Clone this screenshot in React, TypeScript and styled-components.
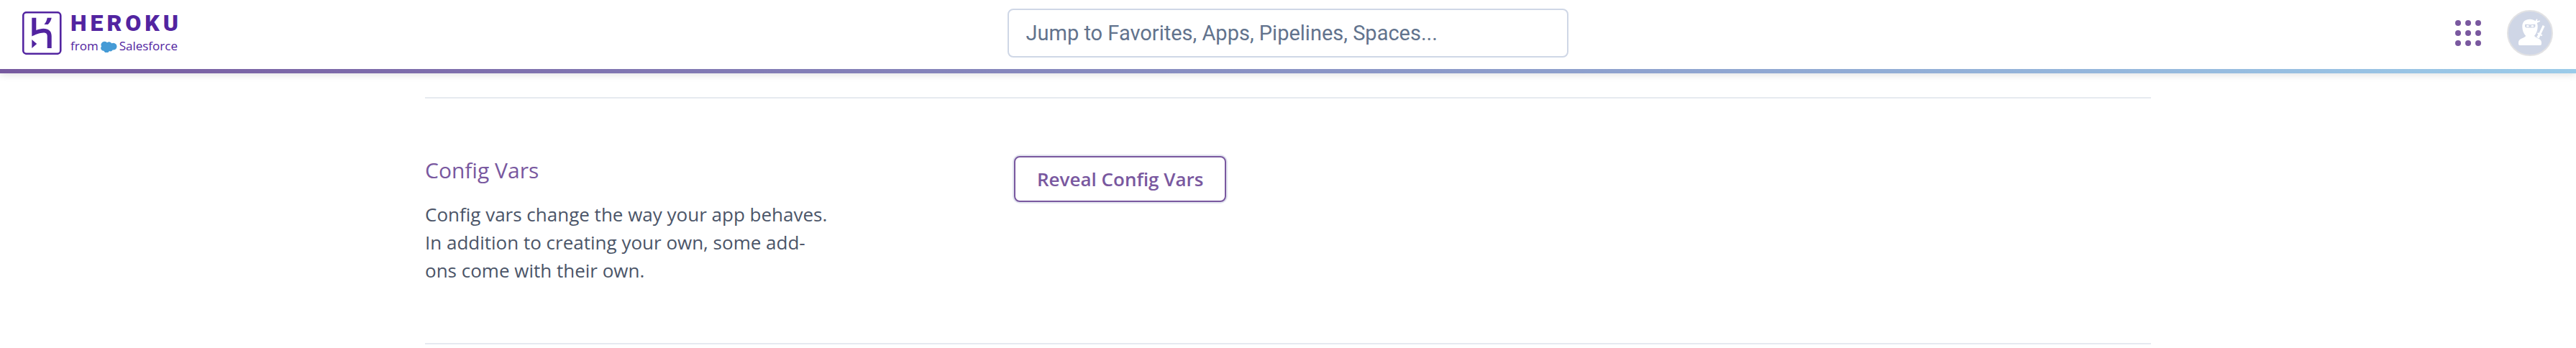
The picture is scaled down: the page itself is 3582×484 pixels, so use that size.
import React from 'react';
import styled, { createGlobalStyle } from 'styled-components';

const brand = '#5224a0';
const purple = '#79589f';

const GlobalStyle = createGlobalStyle`
  *, *::before, *::after { box-sizing: border-box; }
  body {
    margin: 0;
    background: #fff;
    color: #4b5568;
    font-family: 'Open Sans', 'Noto Sans', sans-serif;
  }
`;

const Header = styled.header`
  display: grid;
  grid-template-columns: 1fr minmax(0, 780px) 1fr;
  align-items: center;
  height: 102px;
  padding: 0 32px 4px 31px;
  border-bottom: 6px solid;
  border-image: linear-gradient(to right, #775a9f, #9bcbe9) 1;
  box-shadow: 0 2px 10px rgba(0, 0, 0, 0.12);
`;

const Brand = styled.a`
  display: flex;
  align-items: center;
  gap: 12px;
  justify-self: start;
  color: ${brand};
  text-decoration: none;
`;

const BrandText = styled.span`
  display: flex;
  flex-direction: column;
  gap: 4px;
`;

const Wordmark = styled.span`
  font: 900 32px/32px Roboto, sans-serif;
  letter-spacing: 5px;
`;

const Tagline = styled.span`
  display: flex;
  align-items: center;
  gap: 3px;
  font-size: 17px;
  line-height: 24px;
`;

const SearchInput = styled.input`
  width: 100%;
  height: 68px;
  padding: 0 24px;
  border: 2px solid #cfd7e6;
  border-radius: 8px;
  background: #fff;
  color: #62738d;
  font: 400 29px/40px Roboto, sans-serif;
  outline: none;

  &::placeholder {
    color: #62738d;
    opacity: 1;
  }
`;

const Actions = styled.nav`
  display: flex;
  align-items: center;
  justify-self: end;
  gap: 36px;
`;

const IconButton = styled.button`
  display: flex;
  padding: 0;
  border: 0;
  background: none;
  cursor: pointer;
`;

const Main = styled.main`
  max-width: 2400px;
  margin: 0 auto;
  padding-top: 33px;
`;

const Section = styled.section`
  display: grid;
  grid-template-columns: 570px 1fr;
  column-gap: 249px;
  align-items: start;
  padding: 80px 0 81px;
  border: solid #e6eaf0;
  border-width: 2px 0;
`;

const Title = styled.h2`
  margin: 0 0 22px;
  color: ${purple};
  font-size: 30px;
  font-weight: 400;
  line-height: 40px;
`;

const Description = styled.p`
  margin: 0;
  font-size: 26px;
  line-height: 39px;
`;

const OutlineButton = styled.button`
  justify-self: start;
  height: 64px;
  padding: 0 30px;
  border: 2px solid ${purple};
  border-radius: 8px;
  background: #fff;
  box-shadow: 0 0 0 2px #e3e5f0;
  color: ${purple};
  font: 600 26px/36px 'Open Sans', 'Noto Sans', sans-serif;
  cursor: pointer;
`;

const HerokuMark = () => (
  <svg width="55" height="60" viewBox="31 16 55 60" aria-hidden="true">
    <rect x="32.25" y="17.25" width="52" height="57.5" rx="4.5" fill="none" stroke={brand} strokeWidth="2.6" />
    <g fill={brand}>
      <path d="M44.3 24.7h6v17.4c3.7-1.4 6.7-2.3 10.2-2.3 7 0 11.2 3.700 11.200 10.200v17h-6V50c0-3.500-2.200-4.600-5-4.600-5.500 0-12.500 2.900-16.400 5.100z" />
      <path d="M65.7 24.7h6c-.6 3.400-2.400 6.600-5 9.300h-5.300c2.300-2.700 3.800-5.900 4.300-9.300z" />
      <path d="M44.3 55v12l6.900-6z" />
    </g>
  </svg>
);

const SalesforceCloud = () => (
  <svg width="23" height="17" viewBox="1 -1 22 16" aria-hidden="true">
    <path
      fill="#459bd6"
      d="M9.500 1.900A4.100 4.100 0 0 1 15.600 2.900a5 5 0 0 1 2.300-.5A4.700 4.700 0 0 1 22.500 7.200a4.700 4.700 0 0 1-5.600 4.600 3.500 3.500 0 0 1-4.500 1.400A3.900 3.900 0 0 1 5.200 13a3.700 3.700 0 0 1-3.200-6A4.300 4.300 0 0 1 5.500.6a4.500 4.500 0 0 1 4 1.300z"
    />
  </svg>
);

const AppGrid = () => (
  <svg width="36" height="36" viewBox="0 0 36 36" fill={purple} aria-hidden="true">
    {[4, 18, 32].map((cy) => [4, 18, 32].map((cx) => <circle key={`${cx}-${cy}`} cx={cx} cy={cy} r="4" />))}
  </svg>
);

const NinjaAvatar = () => (
  <svg width="64" height="64" viewBox="0 0 64 64" aria-hidden="true">
    <circle cx="32" cy="32" r="31" fill="#cfd6e6" stroke="#e2e2e4" strokeWidth="2" />
    <g fill="#fff">
      <path d="M32 12.700c3 0 5.700.9 7.500 2.500l1.700-2.900 1.300.8-.8 2.200 4-.9.500 1.300-4.600 2.200c.8 1.400 1.100 3 1.100 5 0 4.700-1.700 9.600-4.700 13.100 1.600 2 3.900 2.800 6 3.700 2.700 1 4 3 4 5.500v1.800c0 1.300-.7 2-2 2H18c-1.300 0-2-.7-2-2v-1.800c0-2.500 1.300-4.500 4-5.500 2.300-.9 4.700-1.700 6.200-3.700-3.200-3.500-4.900-8.400-4.900-13.100 0-6.800 4-10.200 10.700-10.200z" />
      <path d="M49.700 21.100l2.900 1.400-5.200 11 2 1-.9 1.800-2-.9-2 4.100-3.300-1.700 2.300-4-1.400-.7.900-1.800 1.600.7z" />
    </g>
    <path fill="#cfd6e6" d="M26 19.700c4 .6 8.500.6 12.500 0 .6 0 .9.300.9.900v1.600c0 1.400-.8 2.200-2.200 2.200H27.200c-1.400 0-2.200-.8-2.200-2.200v-1.600c0-.6.400-.9 1-.9z" />
    <g fill="#fff">
      <ellipse cx="28.800" cy="22.200" rx="1.800" ry="1.200" />
      <ellipse cx="35.400" cy="22.200" rx="1.800" ry="1.200" />
    </g>
  </svg>
);

export default function App() {
  return (
    <>
      <GlobalStyle />
      <Header>
        <Brand href="#">
          <HerokuMark />
          <BrandText>
            <Wordmark>HEROKU</Wordmark>
            <Tagline>
              from <SalesforceCloud /> Salesforce
            </Tagline>
          </BrandText>
        </Brand>
        <SearchInput type="search" aria-label="Jump to" placeholder="Jump to Favorites, Apps, Pipelines, Spaces..." />
        <Actions aria-label="Account">
          <IconButton type="button" aria-label="Apps menu">
            <AppGrid />
          </IconButton>
          <IconButton type="button" aria-label="Account menu">
            <NinjaAvatar />
          </IconButton>
        </Actions>
      </Header>
      <Main>
        <Section aria-labelledby="config-vars">
          <div>
            <Title id="config-vars">Config Vars</Title>
            <Description>
              Config vars change the way your app behaves. In addition to creating your own, some add-ons come with
              their own.
            </Description>
          </div>
          <OutlineButton type="button">Reveal Config Vars</OutlineButton>
        </Section>
      </Main>
    </>
  );
}
